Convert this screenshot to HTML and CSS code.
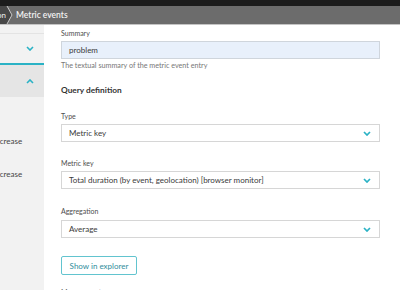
FILE: index.html
```html
<!DOCTYPE html>
<html>
<head>
<meta charset="utf-8">
<link rel="stylesheet" href="styles.css">
</head>
<body>
<header class="topbar"></header>
<nav class="crumbs">
  <div class="crumb-prev"><span>Anomaly detection</span></div>
  <svg class="crumb-sep" width="7" height="18" viewBox="0 0 7 18"><polygon points="0,0 1,0 6,9 1,18 0,18" fill="#474747"/><polyline points="1,0 6,9 1,18" fill="none" stroke="#c9c9c9" stroke-width="1"/></svg>
  <div class="crumb-cur">Metric events</div>
</nav>
<div class="main">
  <aside class="sidebar">
    <div class="side-top"></div>
    <div class="side-row side-row--closed">
      <svg class="chev" width="8" height="5" viewBox="0 0 8 5"><polyline points="1,1 4,4 7,1" fill="none" stroke="#2ab2c5" stroke-width="1.6"/></svg>
    </div>
    <div class="side-row side-row--open">
      <svg class="chev" width="8" height="5" viewBox="0 0 8 5"><polyline points="1,4 4,1 7,4" fill="none" stroke="#2ab2c5" stroke-width="1.6"/></svg>
    </div>
    <div class="side-item side-item--first"><span>Increase</span></div>
    <div class="side-item"><span>Increase</span></div>
  </aside>
  <section class="content">
    <div class="label label--first">Summary</div>
    <div class="input">problem</div>
    <div class="help">The textual summary of the metric event entry</div>
    <h2 class="heading">Query definition</h2>
    <div class="field field--type">
      <div class="label">Type</div>
      <div class="select">Metric key<svg class="sel-chev" width="8" height="5" viewBox="0 0 8 5"><polyline points="1,1 4,4 7,1" fill="none" stroke="#2ab2c5" stroke-width="1.7"/></svg></div>
    </div>
    <div class="field field--key">
      <div class="label">Metric key</div>
      <div class="select">Total duration (by event, geolocation) [browser monitor]<svg class="sel-chev" width="8" height="5" viewBox="0 0 8 5"><polyline points="1,1 4,4 7,1" fill="none" stroke="#2ab2c5" stroke-width="1.7"/></svg></div>
    </div>
    <div class="field field--agg">
      <div class="label">Aggregation</div>
      <div class="select">Average<svg class="sel-chev" width="8" height="5" viewBox="0 0 8 5"><polyline points="1,1 4,4 7,1" fill="none" stroke="#2ab2c5" stroke-width="1.7"/></svg></div>
    </div>
    <button class="btn">Show in explorer</button>
    <div class="label label--mz">Management zone</div>
  </section>
</div>
</body>
</html>
```
FILE: styles.css
```css
* { box-sizing: border-box; }
html, body { margin: 0; padding: 0; }
body {
  width: 400px;
  height: 290px;
  overflow: hidden;
  background: #fff;
  font-family: Lato, "Open Sans", sans-serif;
  color: #333;
}
.topbar { height: 6px; background: #1c1c1c; }
.crumbs {
  height: 19px;
  background: #6c6c6c;
  border-bottom: 1px solid #c4c4c4;
  display: flex;
  align-items: center;
}
.crumb-prev {
  width: 6px;
  height: 18px;
  background: #474747;
  overflow: hidden;
  display: flex;
  justify-content: flex-end;
  align-items: center;
  color: #eee;
  font-size: 8px;
  white-space: nowrap;
}
.crumb-prev span { flex-shrink: 0; }
.crumb-sep { display: block; flex-shrink: 0; }
.crumb-cur {
  margin-left: 3px;
  color: #f2f2f2;
  font-size: 8.5px;
  font-weight: 600;
  line-height: 18px;
}
.main { display: flex; height: 265px; overflow: hidden; }
.sidebar {
  width: 44px;
  flex-shrink: 0;
  background: #f2f2f2;
  overflow: hidden;
}
.side-top { height: 9px; border-bottom: 1px solid #e3e3e3; }
.side-row {
  display: flex;
  align-items: center;
  justify-content: flex-end;
  padding-right: 10px;
}
.side-row--closed { height: 31px; border-bottom: 2px solid #2ab2c5; }
.side-row--open { height: 32px; background: #e5e5e5; }
.chev { display: block; }
.side-item {
  height: 12px;
  line-height: 12px;
  font-size: 8px;
  color: #444;
  white-space: nowrap;
  margin-top: 21px;
}
.side-item span { display: block; margin-left: -7px; }
.side-item--first { margin-top: 38px; }
.content {
  padding-left: 17px;
  width: 336px;
  flex-shrink: 0;
}
.label {
  font-size: 7px;
  line-height: 10px;
  height: 10px;
  color: #4d4d4d;
  margin-bottom: 3px;
  white-space: nowrap;
}
.label--first { margin-top: 3px; }
.label--mz { margin-top: 12px; }
.input, .select {
  width: 319px;
  height: 18px;
  border: 1px solid #d6d6d6;
  padding: 0 8px 0 7px;
  font-size: 8px;
  color: #3a3a3a;
  display: flex;
  align-items: center;
  white-space: nowrap;
}
.input { background: #e8f0fb; border-color: #cfd5dc; }
.select { background: #fff; justify-content: space-between; }
.sel-chev { display: block; flex-shrink: 0; }
.help {
  margin-top: 2px;
  font-size: 7.2px;
  line-height: 10px;
  color: #777;
}
.heading {
  margin: 13px 0 0;
  font-size: 8.3px;
  line-height: 12px;
  font-weight: 700;
  color: #333;
}
.field--type { margin-top: 15px; }
.field--key { margin-top: 16px; }
.field--agg { margin-top: 17px; }
.field--agg .label { margin-bottom: 4px; }
.btn {
  display: block;
  margin-top: 18px;
  width: 76px;
  height: 19px;
  padding: 0;
  background: #fff;
  border: 1.5px solid #62c4cf;
  border-radius: 2px;
  font-family: inherit;
  font-size: 8px;
  color: #2f8d9c;
}
```
